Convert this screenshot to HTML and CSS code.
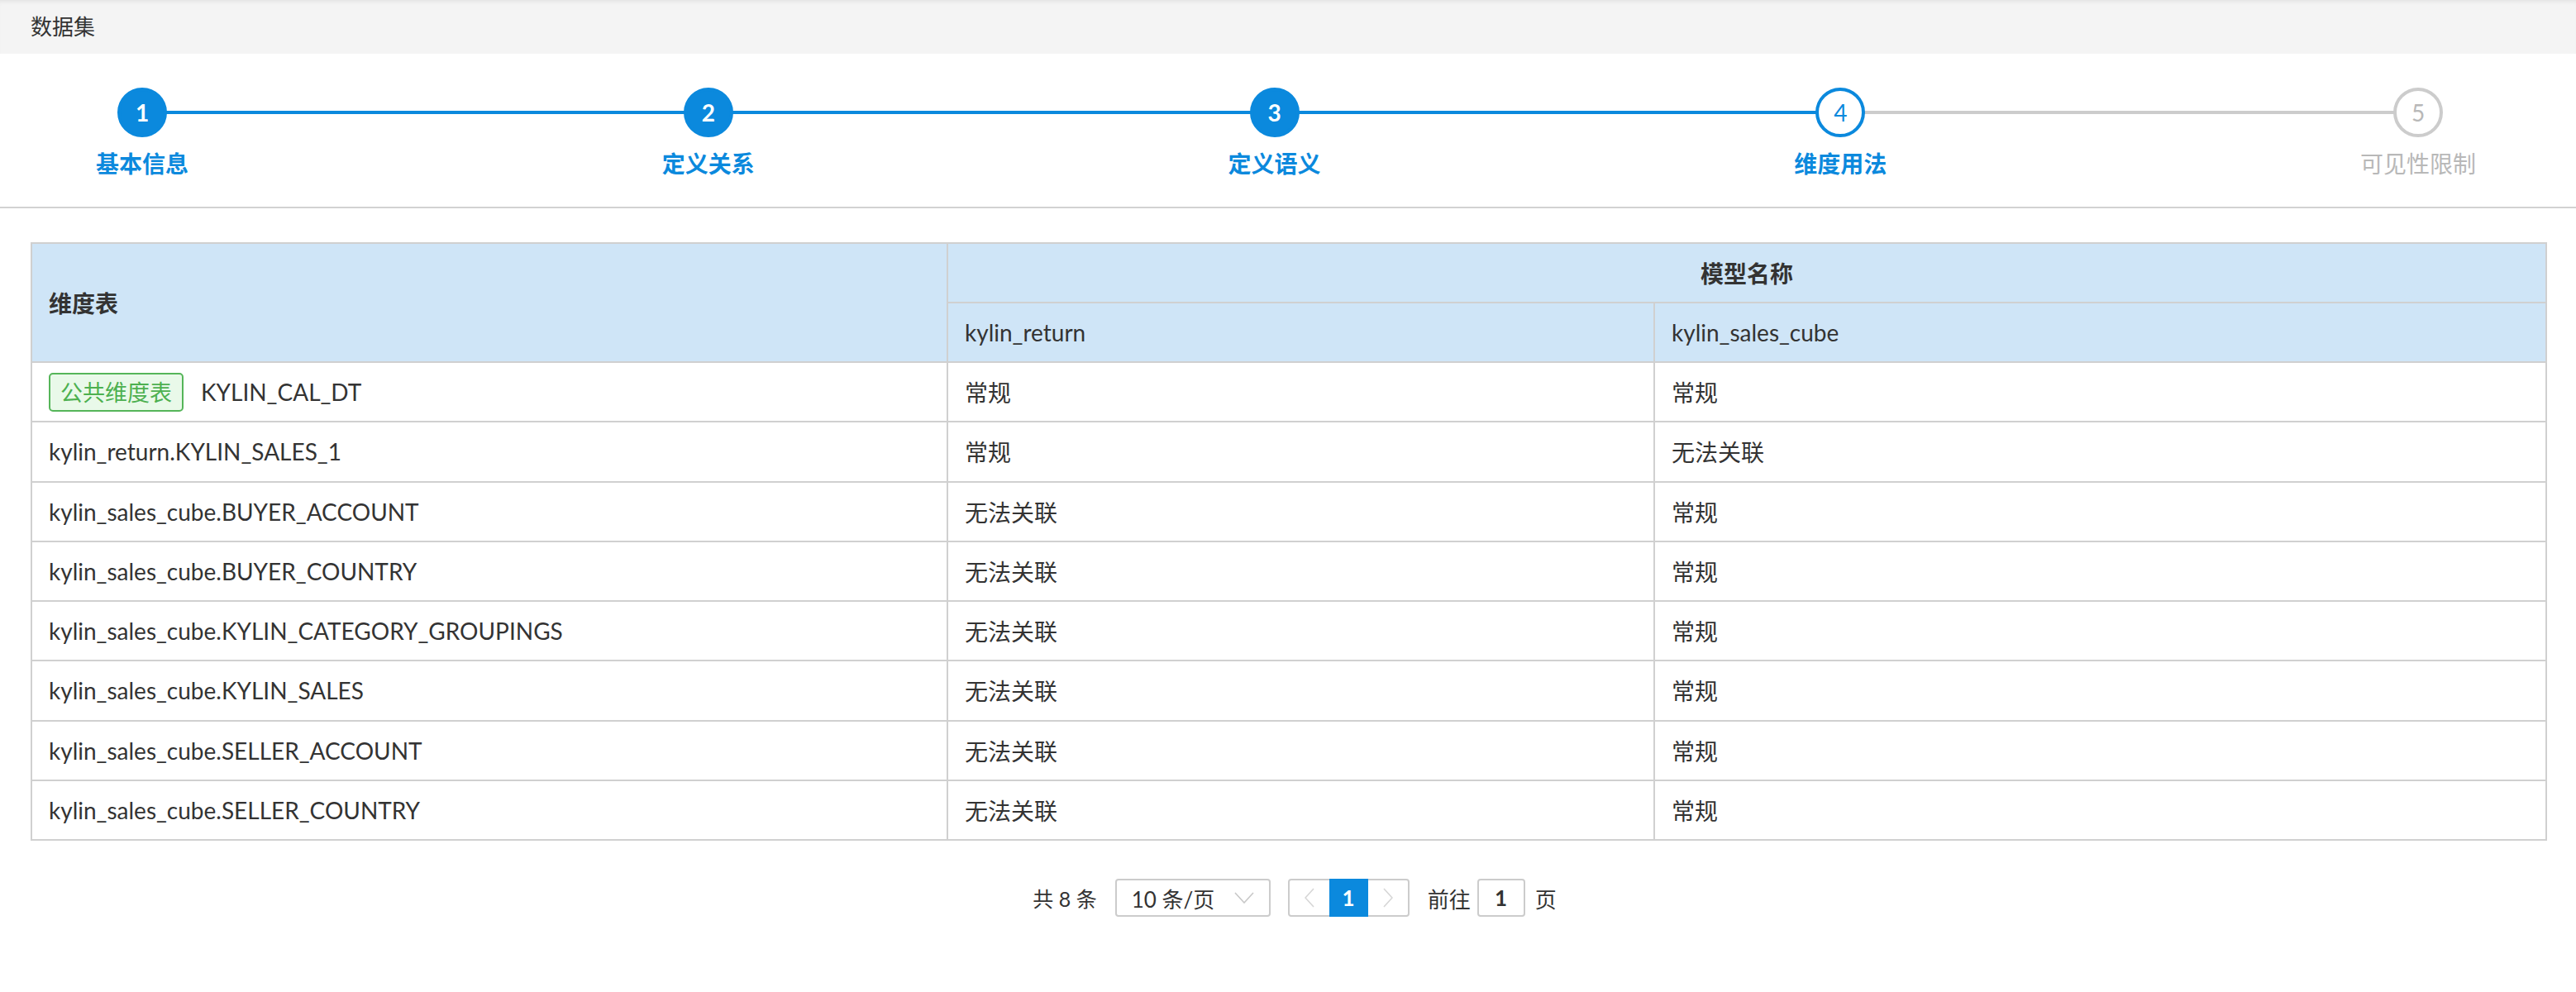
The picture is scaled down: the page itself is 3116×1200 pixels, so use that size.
FILE: index.html
```html
<!DOCTYPE html>
<html lang="zh-CN">
<head>
<meta charset="utf-8">
<title>数据集</title>
<link rel="stylesheet" href="styles.css">
</head>
<body>
<div class="topbar">数据集</div>

<div class="steps">
  <div class="step done">
    <div class="step-line"></div>
    <div class="step-main">
      <div class="step-icon">1</div>
      <div class="step-title">基本信息</div>
    </div>
  </div>
  <div class="step done">
    <div class="step-line"></div>
    <div class="step-main">
      <div class="step-icon">2</div>
      <div class="step-title">定义关系</div>
    </div>
  </div>
  <div class="step done">
    <div class="step-line"></div>
    <div class="step-main">
      <div class="step-icon">3</div>
      <div class="step-title">定义语义</div>
    </div>
  </div>
  <div class="step current">
    <div class="step-line to-last"></div>
    <div class="step-main">
      <div class="step-icon">4</div>
      <div class="step-title">维度用法</div>
    </div>
  </div>
  <div class="step wait last">
    <div class="step-main">
      <div class="step-icon">5</div>
      <div class="step-title">可见性限制</div>
    </div>
  </div>
</div>

<div class="content">
  <table class="grid">
    <colgroup>
      <col class="col-dim">
      <col class="col-m1">
      <col class="col-m2">
    </colgroup>
    <thead>
      <tr>
        <th rowspan="2" class="th-left">维度表</th>
        <th colspan="2" class="th-center">模型名称</th>
      </tr>
      <tr>
        <th class="th-sub">kylin_return</th>
        <th class="th-sub">kylin_sales_cube</th>
      </tr>
    </thead>
    <tbody>
      <tr><td><span class="tag">公共维度表</span><span class="tag-name">KYLIN_CAL_DT</span></td><td>常规</td><td>常规</td></tr>
      <tr><td>kylin_return.KYLIN_SALES_1</td><td>常规</td><td>无法关联</td></tr>
      <tr><td>kylin_sales_cube.BUYER_ACCOUNT</td><td>无法关联</td><td>常规</td></tr>
      <tr><td>kylin_sales_cube.BUYER_COUNTRY</td><td>无法关联</td><td>常规</td></tr>
      <tr><td>kylin_sales_cube.KYLIN_CATEGORY_GROUPINGS</td><td>无法关联</td><td>常规</td></tr>
      <tr><td>kylin_sales_cube.KYLIN_SALES</td><td>无法关联</td><td>常规</td></tr>
      <tr><td>kylin_sales_cube.SELLER_ACCOUNT</td><td>无法关联</td><td>常规</td></tr>
      <tr><td>kylin_sales_cube.SELLER_COUNTRY</td><td>无法关联</td><td>常规</td></tr>
    </tbody>
  </table>

  <div class="pager">
    <span class="total">共 8 条</span>
    <div class="size-select">
      <span>10 条/页</span>
      <svg class="chev-down" viewBox="0 0 24 14" width="24" height="14"><path d="M1 1 L12 13 L23 1" fill="none" stroke="#c8c8c8" stroke-width="1.6"/></svg>
    </div>
    <div class="pages">
      <span class="pg-btn"><svg viewBox="0 0 12 24" width="12" height="24"><path d="M11 1 L1 12 L11 23" fill="none" stroke="#d6d6d6" stroke-width="1.6"/></svg></span>
      <span class="pg-num active">1</span>
      <span class="pg-btn"><svg viewBox="0 0 12 24" width="12" height="24"><path d="M1 1 L11 12 L1 23" fill="none" stroke="#d6d6d6" stroke-width="1.6"/></svg></span>
    </div>
    <span class="goto">前往</span>
    <div class="goto-input">1</div>
    <span class="goto-unit">页</span>
  </div>
</div>
</body>
</html>
```

FILE: styles.css
```css
html, body {
  margin: 0;
  padding: 0;
  background: #ffffff;
}
body {
  font-family: Lato, "Noto Sans CJK SC", sans-serif;
  color: #333333;
  width: 3116px;
}

.topbar {
  height: 65px;
  background: #f4f4f4;
  box-shadow: inset 0 5px 5px -3px rgba(0, 0, 0, 0.07);
  font-size: 26px;
  line-height: 65px;
  padding-left: 37px;
  color: #333333;
}

/* steps */
.steps {
  display: flex;
  padding: 41px 121px 0 116px;
  height: 144px;
  border-bottom: 2px solid #d2d2d2;
}
.step {
  flex: 1 1 0;
  position: relative;
}
.step.last {
  flex: 0 0 auto;
}
.step-main {
  display: inline-flex;
  flex-direction: column;
  align-items: center;
  position: relative;
  z-index: 1;
}
.step-line {
  position: absolute;
  top: 28px;
  height: 4px;
  left: 56px;
  right: -56px;
  background: #0b89dd;
}
.step-line.to-last {
  right: -70px;
  background: #cccccc;
}
.step-icon {
  width: 60px;
  height: 60px;
  box-sizing: border-box;
  border-radius: 50%;
  border: 4px solid #0b89dd;
  background: #0b89dd;
  color: #ffffff;
  font-size: 28px;
  font-weight: 700;
  display: flex;
  align-items: center;
  justify-content: center;
}
.step-title {
  margin-top: 12px;
  font-size: 28px;
  line-height: 40px;
  font-weight: 700;
  color: #0b89dd;
  white-space: nowrap;
}
.step.current .step-icon {
  background: #ffffff;
  color: #0b89dd;
  font-weight: 400;
}
.step.wait .step-icon {
  background: #ffffff;
  border-color: #cccccc;
  color: #b8b8b8;
  font-weight: 400;
}
.step.wait .step-title {
  color: #b8b8b8;
  font-weight: 400;
}

/* table */
.content {
  padding: 41px 37px 0 37px;
}
.grid {
  width: 3042px;
  table-layout: fixed;
  border-collapse: collapse;
  font-size: 28px;
  color: #333333;
}
.col-dim { width: 1108px; }
.col-m1 { width: 855px; }
.col-m2 { width: 1079px; }
.grid th, .grid td {
  border: 2px solid #d0d0d0;
  height: 70px;
  padding: 0 20px;
  text-align: left;
  vertical-align: middle;
  white-space: nowrap;
}
.grid td {
  height: 70.25px;
}
.grid thead th {
  background: #cfe5f7;
}
.th-left, .th-center {
  font-weight: 700;
}
.th-center {
  text-align: center !important;
}
.th-sub {
  font-weight: 400;
}
.tag {
  display: inline-block;
  box-sizing: border-box;
  height: 47px;
  line-height: 43px;
  padding: 0 12px;
  border: 2px solid #55b559;
  border-radius: 5px;
  background: #e9f9e9;
  color: #4db050;
  font-size: 27px;
  vertical-align: middle;
}
.tag-name {
  margin-left: 21px;
  vertical-align: middle;
}

/* pagination */
.pager {
  display: flex;
  justify-content: center;
  align-items: center;
  margin-top: 46px;
  padding-left: 16px;
  font-size: 26px;
  color: #333333;
}
.total {
  margin-right: 22px;
  white-space: pre;
  font-size: 25px;
}
.size-select {
  box-sizing: border-box;
  width: 188px;
  height: 46px;
  border: 2px solid #cccccc;
  border-radius: 4px;
  display: flex;
  align-items: center;
  justify-content: space-between;
  padding: 0 18px 0 18px;
  margin-right: 21px;
}
.chev-down {
  display: block;
}
.pages {
  display: flex;
  box-sizing: border-box;
  height: 46px;
  border: 2px solid #cccccc;
  border-radius: 4px;
  margin-right: 22px;
}
.pg-btn {
  width: 48px;
  display: flex;
  align-items: center;
  justify-content: center;
}
.pg-num {
  width: 47px;
  margin: -2px 0;
  display: flex;
  align-items: center;
  justify-content: center;
  font-weight: 700;
}
.pg-num.active {
  background: #0b89dd;
  color: #ffffff;
}
.goto {
  margin-right: 8px;
}
.goto-input {
  box-sizing: border-box;
  width: 58px;
  height: 46px;
  border: 2px solid #cccccc;
  border-radius: 4px;
  display: flex;
  align-items: center;
  justify-content: center;
  font-weight: 700;
  margin-right: 12px;
}
```
